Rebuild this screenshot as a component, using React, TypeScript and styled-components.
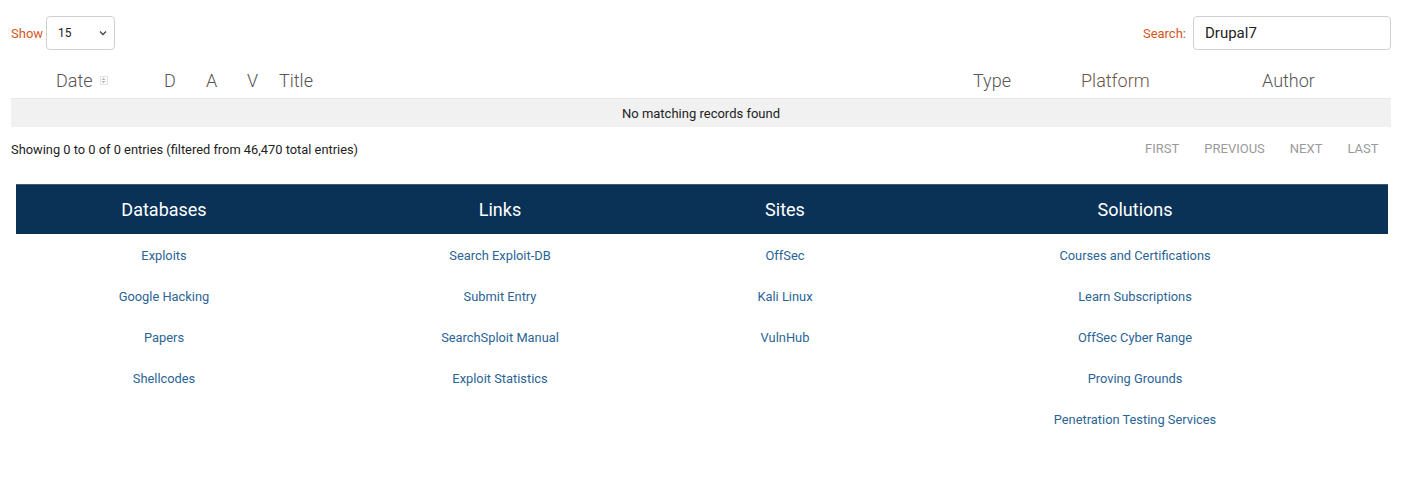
import * as React from "react";
import styled, { createGlobalStyle } from "styled-components";

const GlobalStyle = createGlobalStyle`
  html, body {
    margin: 0;
    padding: 0;
    background: #fff;
    font-family: Roboto, "Liberation Sans", sans-serif;
  }
`;

type col = {
  label: string;
  tone?: string;
  sort?: boolean;
};

const columns: col[] = [
  { label: "Date", sort: true },
  { label: "D" },
  { label: "A" },
  { label: "V" },
  { label: "Title" },
  { label: "Type" },
  { label: "Platform", tone: "#6a5548" },
  { label: "Author" },
];

const footer = [
  { title: "Databases", links: ["Exploits", "Google Hacking", "Papers", "Shellcodes"] },
  { title: "Links", links: ["Search Exploit-DB", "Submit Entry", "SearchSploit Manual", "Exploit Statistics"] },
  { title: "Sites", links: ["OffSec", "Kali Linux", "VulnHub"] },
  {
    title: "Solutions",
    links: [
      "Courses and Certifications",
      "Learn Subscriptions",
      "OffSec Cyber Range",
      "Proving Grounds",
      "Penetration Testing Services",
    ],
  },
];

const App = () => {
  return (
    <>
      <GlobalStyle />
      <Page>
        <Controls>
          <Label>
            Show
            <SelectBox>
              <span>15</span>
              <svg width="8" height="6" viewBox="0 0 8 6">
                <path d="M1 1.5l3 3 3-3" fill="none" stroke="#444" strokeWidth="1.3" />
              </svg>
            </SelectBox>
          </Label>
          <Label>
            Search:
            <SearchInput defaultValue="Drupal7" />
          </Label>
        </Controls>

        <HeadRow>
          {columns.map((c) => (
            <HeadCell key={c.label} $tone={c.tone}>
              {c.label}
              {c.sort && (
                <SortIcon>
                  <svg width="5" height="7" viewBox="0 0 5 7">
                    <path d="M2.5 0.5L4.5 3H0.5z M2.5 6.5L4.5 4H0.5z" fill="#bbb" />
                  </svg>
                </SortIcon>
              )}
            </HeadCell>
          ))}
        </HeadRow>
        <EmptyRow>No matching records found</EmptyRow>

        <InfoBar>
          <Info>Showing 0 to 0 of 0 entries (filtered from 46,470 total entries)</Info>
          <Pager>
            <PageBtn>First</PageBtn>
            <PageBtn>Previous</PageBtn>
            <PageBtn>Next</PageBtn>
            <PageBtn>Last</PageBtn>
          </Pager>
        </InfoBar>

        <Footer>
          {footer.map((f) => (
            <FooterCol key={f.title}>
              <FooterTitle>{f.title}</FooterTitle>
              <LinkList>
                {f.links.map((l) => (
                  <FooterLink key={l} href="#">
                    {l}
                  </FooterLink>
                ))}
              </LinkList>
            </FooterCol>
          ))}
        </Footer>
      </Page>
    </>
  );
};

const Page = styled.div`
  padding: 16px 21px 0 11px;
  width: 1412px;
  box-sizing: border-box;
`;

const Controls = styled.div`
  display: flex;
  justify-content: space-between;
  align-items: center;
  height: 34px;
`;

const Label = styled.label`
  display: flex;
  align-items: center;
  gap: 3px;
  color: #d4561c;
  font-size: 13px;
`;

const SelectBox = styled.div`
  width: 69px;
  height: 34px;
  box-sizing: border-box;
  border: 1px solid #d0d0d0;
  border-radius: 4px;
  display: flex;
  align-items: center;
  justify-content: space-between;
  padding: 0 7px 0 11px;
  color: #222;
  font-size: 12px;
`;

const SearchInput = styled.input`
  width: 198px;
  height: 34px;
  box-sizing: border-box;
  border: 1px solid #d0d0d0;
  border-radius: 4px;
  padding: 0 11px;
  font: 400 15px Roboto, "Liberation Sans", sans-serif;
  color: #222;
  margin-left: 4px;
  outline: none;
`;

const HeadRow = styled.div`
  display: grid;
  grid-template-columns: 108px 42px 41px 32px 694px 108px 181px 1fr;
  padding: 13px 0 0 45px;
  height: 48px;
  box-sizing: border-box;
  align-items: center;
`;

const HeadCell = styled.div<{ $tone?: string }>`
  display: flex;
  align-items: center;
  font: 300 18px Roboto, "Liberation Sans", sans-serif;
  color: ${(p) => p.$tone || "#555"};
`;

const SortIcon = styled.span`
  display: inline-flex;
  align-items: center;
  justify-content: center;
  width: 8px;
  height: 9px;
  border: 1px solid #e2e2e2;
  box-sizing: border-box;
  margin-left: 7px;
`;

const EmptyRow = styled.div`
  background: #f1f1f1;
  border-top: 1px solid #e8e8e8;
  height: 28px;
  display: flex;
  align-items: center;
  justify-content: center;
  font-size: 13px;
  color: #222;
`;

const InfoBar = styled.div`
  display: flex;
  justify-content: space-between;
  align-items: center;
  margin-top: 10px;
  height: 25px;
`;

const Info = styled.div`
  font-size: 12.85px;
  color: #222;
`;

const Pager = styled.div`
  display: flex;
  margin-top: -3px;
`;

const PageBtn = styled.span`
  padding: 0 12.5px;
  font-size: 13px;
  text-transform: uppercase;
  color: #9a9a9a;
`;

const Footer = styled.div`
  display: grid;
  grid-template-columns: 296px 376px 194px 506px;
  margin: 22px 0 0 5px;
`;

const FooterCol = styled.div`
  display: flex;
  flex-direction: column;
`;

const FooterTitle = styled.div`
  background: #0a3257;
  color: #fff;
  height: 50px;
  display: flex;
  align-items: center;
  justify-content: center;
  font-size: 18px;
  border-top: 1px solid #3a5a78;
  box-sizing: border-box;
`;

const LinkList = styled.div`
  display: flex;
  flex-direction: column;
  align-items: center;
  padding-top: 13px;
`;

const FooterLink = styled.a`
  font-size: 12.85px;
  color: #2a6496;
  text-decoration: none;
  line-height: 17px;
  margin-bottom: 24px;
`;

export default App;
